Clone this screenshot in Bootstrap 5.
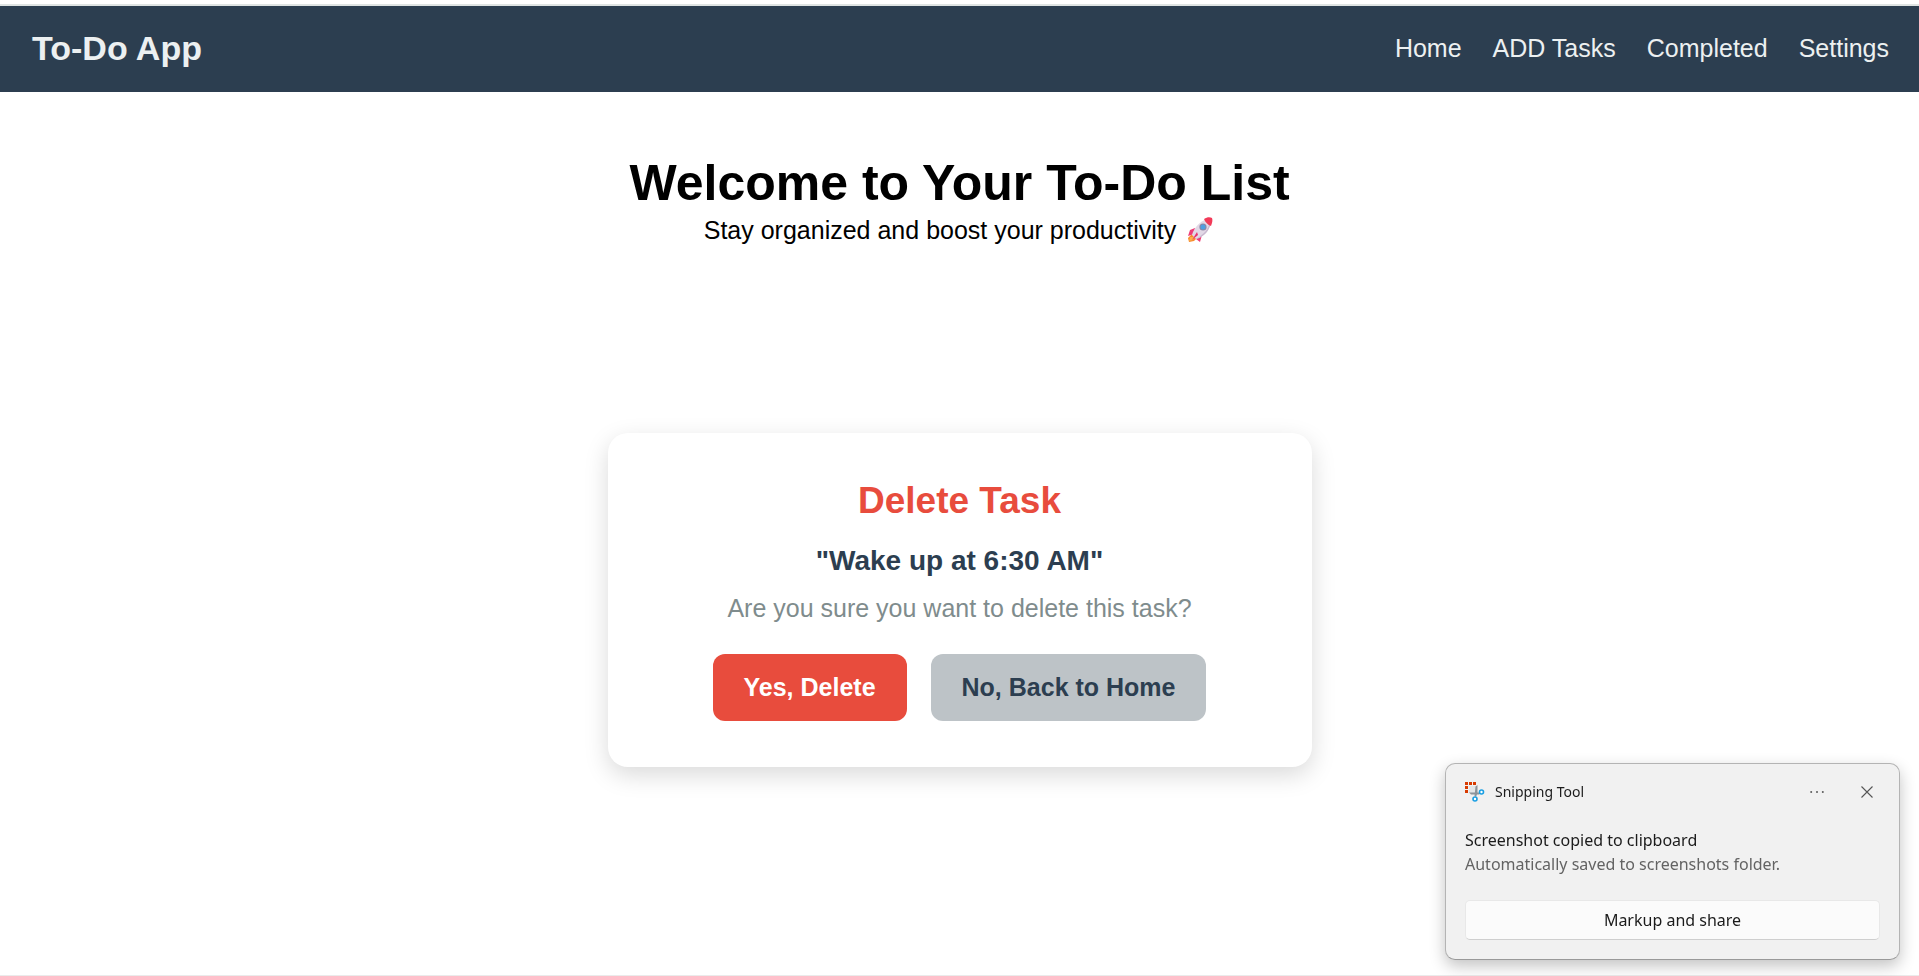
<!DOCTYPE html>
<html lang="en">
<head>
<meta charset="utf-8">
<meta name="viewport" content="width=device-width, initial-scale=1">
<title>To-Do App</title>
<link href="https://cdn.jsdelivr.net/npm/bootstrap@5.3.0/dist/css/bootstrap.min.css" rel="stylesheet">
<style>
  body { font-family: "Liberation Sans", Arial, sans-serif; font-size: 25px; line-height: 28px; color: #000; background: #fff; }
  .page { border-bottom: 1px solid #ebebeb; }
  .top-strip { height: 6px; border-bottom: 2px solid #dfe4e3; }
  .app-bar { background: #2c3e50; min-height: 86px; padding: 0 30px 2px 32px; --bs-navbar-nav-link-padding-x: 0; }
  .app-bar .navbar-brand { font-size: 34px; line-height: 40px; font-weight: 700; color: #ecf0f1; }
  .app-bar .navbar-nav { gap: 31px; }
  .app-bar .nav-link { color: #ecf0f1; padding: 0; }
  .app-bar .nav-link:hover { color: #fff; }
  .intro { padding-top: 62px; }
  .intro h1 { font-size: 50px; line-height: 58px; font-weight: 700; margin-bottom: 4px; }
  .tagline { gap: 11px; }
  .rocket { width: 28px; height: 26px; }
  .confirm { max-width: 704px; margin-top: 189px; padding: 46px; border: 0; border-radius: 20px; box-shadow: 0 8px 24px rgba(0, 0, 0, .15); }
  .confirm h2 { font-size: 37px; line-height: 44px; font-weight: 700; color: #e84c3d; margin-bottom: 22px; }
  .task-name { font-size: 28px; line-height: 32px; color: #2c3e50; margin-bottom: 17px; }
  .question { color: #7f8c8d; margin-bottom: 32px; }
  .actions { gap: 24px; }
  .actions .btn { font-size: 25px; line-height: 29px; font-weight: 700; padding: 19px 31px; border: 0; border-radius: 12px; }
  .btn-yes, .btn-yes:hover { background: #e84c3d; color: #fff; }
  .btn-no, .btn-no:hover { background: #bdc3c7; color: #2c3e50; }
  .notice { right: 19px; bottom: 16px; width: 455px; max-width: 95vw; padding: 16px 19px 19px; background: #f1f1f1; border: 1px solid #b4b4b4; border-bottom-color: #999; border-radius: 10px; box-shadow: 0 6px 16px rgba(0, 0, 0, .24); font-family: "Noto Sans", "Open Sans", sans-serif; font-size: 16px; line-height: 24px; color: #1b1b1b; }
  .notice-head { gap: 10px; }
  .notice-title { font-size: 14px; }
  .notice-tool { background: none; border: 0; padding: 0; width: 26px; height: 24px; }
  .notice .saved { color: #636363; }
  .btn-share, .btn-share:hover { background: #fbfbfb; color: #1b1b1b; border: 1px solid #e8e8e8; border-bottom-color: #cfcfcf; border-radius: 5px; font-size: 16px; line-height: 24px; padding: 7px; }
</style>
</head>
<body>
<div class="page min-vh-100">
  <div class="top-strip"></div>
  <nav class="navbar navbar-expand app-bar">
    <a class="navbar-brand m-0 p-0" href="#">To-Do App</a>
    <ul class="navbar-nav ms-auto">
      <li class="nav-item"><a class="nav-link" href="#">Home</a></li>
      <li class="nav-item"><a class="nav-link" href="#">ADD Tasks</a></li>
      <li class="nav-item"><a class="nav-link" href="#">Completed</a></li>
      <li class="nav-item"><a class="nav-link" href="#">Settings</a></li>
    </ul>
  </nav>
  <main>
    <header class="intro text-center">
      <h1>Welcome to Your To-Do List</h1>
      <p class="tagline d-flex justify-content-center align-items-center m-0">Stay organized and boost your productivity
        <svg class="rocket" viewBox="0 0 28 26" role="img" aria-label="rocket">
          <path d="M5 17 1 21l1 4 5-1 4-4z" fill="#f7892b"/>
          <path d="M3 20l-1 4 4-1 2-3z" fill="#fbb04a"/>
          <path d="M8 11 3 13 1 19l6-2zM15 18l-2 7-4-3-1-3z" fill="#ee3b76"/>
          <path d="M22 2C15 3 10 7 6 15l-1 3 4 4 3-1c8-4 11-10 12-17z" fill="#e2d8e6"/>
          <path d="M23 5c-2 8-6 12-14 17l3-1c8-4 11-9 12-17z" fill="#c9b9cf"/>
          <path d="M17 2c3-2 6-2 8-1 1 2 0 5-1 8-3-1-6-4-7-7z" fill="#f23a58"/>
          <path d="M10 15l-5 8 6-5z" fill="#e8336d"/>
          <circle cx="16" cy="10" r="3.600" fill="#8b86a3"/>
          <circle cx="16" cy="10" r="2.500" fill="#4f9fe0"/>
        </svg>
      </p>
    </header>
    <section class="card confirm mx-auto text-center">
      <h2>Delete Task</h2>
      <p class="task-name fw-bold">"Wake up at 6:30 AM"</p>
      <p class="question">Are you sure you want to delete this task?</p>
      <div class="actions d-flex flex-wrap justify-content-center">
        <button type="button" class="btn btn-yes">Yes, Delete</button>
        <button type="button" class="btn btn-no">No, Back to Home</button>
      </div>
    </section>
  </main>
</div>

<aside class="notice position-fixed">
  <div class="notice-head d-flex align-items-center">
    <svg width="20" height="20" viewBox="0 0 20 20" aria-hidden="true">
      <path d="M4 4h7v7H4z" fill="#e3e5e6"/>
      <path d="M10.500 4.500l2-1.500V11l-1.500 4-1.500-1zM4 10.500h10l1.500.7-1.500 1.300H6z" fill="#8c949a"/>
      <path d="M0 0h3v3H0zM4 0h3v3H4zM8 0h3v3H8zM0 4h3v3H0zM0 8h3v3H0z" fill="#d83b01"/>
      <circle cx="16.500" cy="10" r="2" fill="#fff" stroke="#1a9fe3" stroke-width="1.600"/>
      <circle cx="10" cy="17" r="2" fill="#fff" stroke="#1a9fe3" stroke-width="1.600"/>
    </svg>
    <span class="notice-title">Snipping Tool</span>
    <div class="d-flex gap-4 ms-auto">
      <button type="button" class="notice-tool d-flex align-items-center justify-content-center" aria-label="More options">
        <svg width="14" height="4" viewBox="0 0 14 4" fill="#5a5a5a"><circle cx="1.200" cy="2" r="1"/><circle cx="7" cy="2" r="1"/><circle cx="12.800" cy="2" r="1"/></svg>
      </button>
      <button type="button" class="notice-tool d-flex align-items-center justify-content-center" aria-label="Close">
        <svg width="12" height="12" viewBox="0 0 12 12" fill="none" stroke="#555" stroke-width="1.100"><path d="M.5.5l11 11M11.500.5l-11 11"/></svg>
      </button>
    </div>
  </div>
  <div class="mt-4">Screenshot copied to clipboard</div>
  <div class="saved mb-4">Automatically saved to screenshots folder.</div>
  <button type="button" class="btn btn-share w-100">Markup and share</button>
</aside>
<script src="https://cdn.jsdelivr.net/npm/bootstrap@5.3.0/dist/js/bootstrap.bundle.min.js"></script>
</body>
</html>
